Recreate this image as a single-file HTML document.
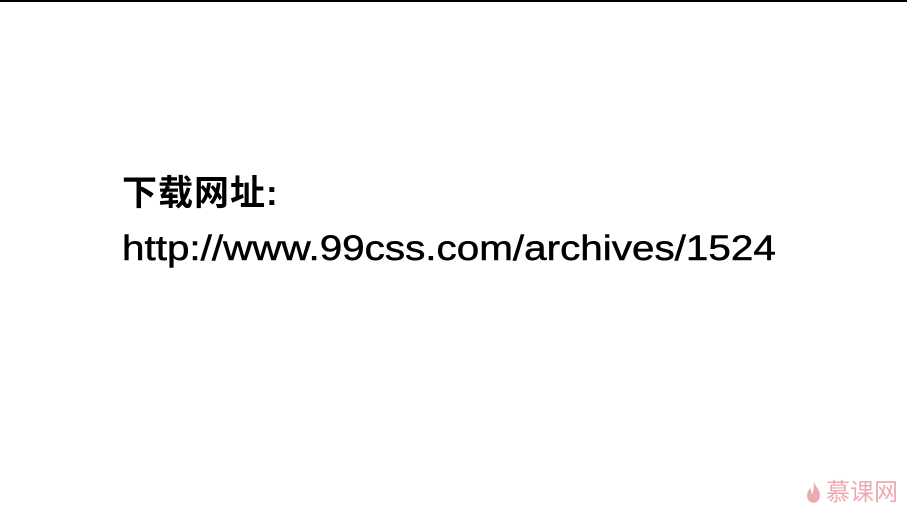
<!DOCTYPE html>
<html><head><meta charset="utf-8"><style>
html,body{margin:0;padding:0;}
body{width:907px;height:505px;background:#fff;position:relative;overflow:hidden;font-family:"Liberation Sans","Noto Sans CJK SC",sans-serif;color:#000;}
.top{position:absolute;left:0;top:0;width:907px;height:2px;background:#000;}
.t1{position:absolute;left:122px;top:174px;font-size:35px;line-height:40px;white-space:nowrap;font-weight:bold;letter-spacing:1px;}
.t2{position:absolute;left:122px;top:228px;font-size:35px;line-height:42px;white-space:nowrap;transform:scaleX(1.155);transform-origin:0 0;-webkit-text-stroke:0.5px #000;}
.logo{position:absolute;left:806px;top:477px;color:#eeaab2;font-size:24px;line-height:26px;font-family:"Noto Sans CJK SC",sans-serif;white-space:nowrap;}
</style></head><body>
<div class="top"></div>
<div class="t1">下载网址:</div>
<div class="t2">http://www.99css.com/archives/1524</div>
<div class="logo"><svg width="15" height="24" viewBox="0 0 14 22" style="vertical-align:-4px;margin-right:5px"><path d="M7 1C9 6 13 9 13 14C13 19 10 21 7 21C3 21 1 18 1 14C1 11 3 9 4 7C5 10 5 12 6 13C7 9 8 5 7 1Z" fill="#eeaab2"/></svg>慕课网</div>
</body></html>
